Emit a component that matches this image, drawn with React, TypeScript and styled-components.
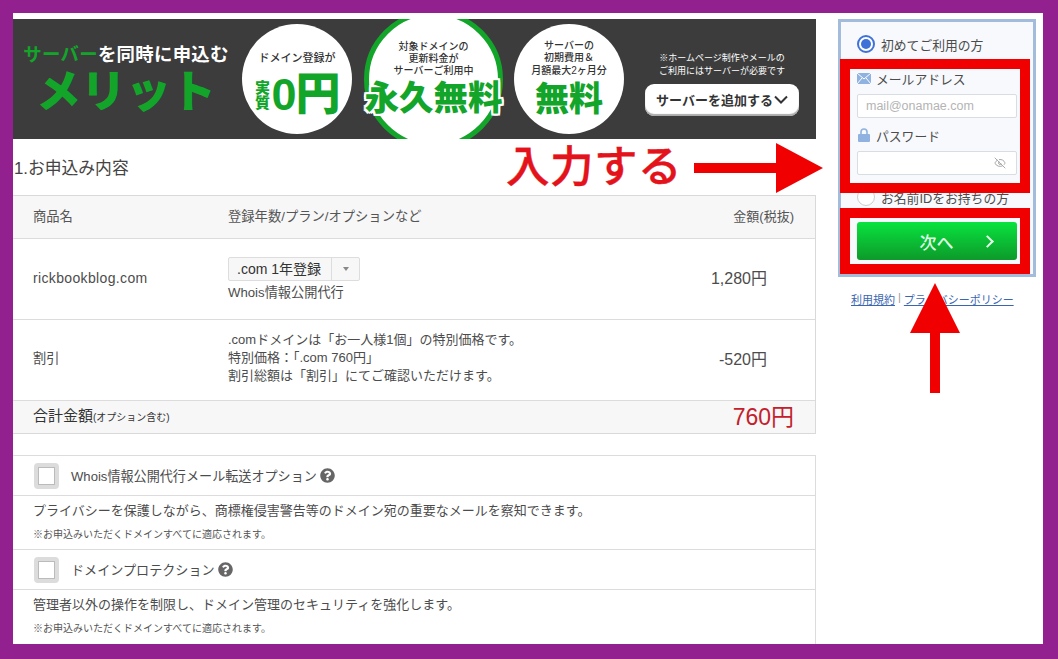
import React from 'react';
import styled, { createGlobalStyle } from 'styled-components';
import { FaQuestionCircle } from 'react-icons/fa';
import { EyeOff } from 'lucide-react';

const GlobalStyle = createGlobalStyle`
  html, body {
    margin: 0;
    padding: 0;
    height: 100%;
    overflow: hidden;
    background: #92218f;
  }
  body {
    font-family: "Liberation Sans", "Noto Sans CJK JP", sans-serif;
    color: #4c4c4c;
  }
  * {
    box-sizing: border-box;
  }
`;

const GREEN = '#12a52a';
const RED = '#f00000';

const Page = styled.div`
  width: 1058px;
  height: 659px;
  padding: 13px 15px 15px 13px;
`;
const Sheet = styled.div`
  position: relative;
  height: 631px;
  background: #fff;
  display: flex;
  overflow: hidden;
  padding-top: 6px;
`;
const Main = styled.main`
  width: 803px;
  flex: none;
`;

/* banner */
const Banner = styled.div`
  height: 120px;
  background: #3c3c3c;
  display: flex;
  align-items: center;
  overflow: hidden;
  padding-left: 10px;
`;
const Headline = styled.div`
  width: 206px;
  flex: none;
  text-align: center;
  margin-top: 3px;
`;
const HeadlineTop = styled.div`
  font-size: 18.4px;
  font-weight: 700;
  color: #fff;
  line-height: 22px;
  white-space: nowrap;
  letter-spacing: 0.3px;
`;
const GreenText = styled.span`
  color: ${GREEN};
`;
const HeadlineBig = styled.div`
  font-size: 45px;
  font-weight: 900;
  color: ${GREEN};
  line-height: 50px;
  margin-top: 2px;
  white-space: nowrap;
`;
const Circle = styled.div<{ $size: number; $ring?: boolean }>`
  width: ${p => p.$size}px;
  height: ${p => p.$size}px;
  flex: none;
  border-radius: 50%;
  background: #fff;
  border: ${p => (p.$ring ? `5px solid ${GREEN}` : 'none')};
  display: flex;
  flex-direction: column;
  align-items: center;
  justify-content: center;
  color: #333;
  font-weight: 500;
  font-size: 10px;
  line-height: 12.5px;
  text-align: center;
  white-space: nowrap;
`;
const FirstCircle = styled(Circle)`
  margin-left: 13px;
  font-size: 11px;
  padding-top: 12px;
`;
const RingCircle = styled(Circle)`
  margin-left: 12px;
  line-height: 12px;
`;
const LastCircle = styled(Circle)`
  margin-left: 11px;
`;
const ZeroPrice = styled.div`
  display: flex;
  align-items: center;
  color: ${GREEN};
  font-weight: 900;
  margin-top: 8px;
`;
const ZeroSmall = styled.span`
  font-size: 15px;
  line-height: 15px;
  width: 16px;
  white-space: normal;
  margin-right: 1px;
`;
const ZeroBig = styled.span`
  font-size: 45px;
  line-height: 46px;
  letter-spacing: -1px;
`;
const FreeForever = styled.div`
  font-size: 34.5px;
  line-height: 38px;
  font-weight: 900;
  color: ${GREEN};
  margin-top: 2px;
  text-shadow: 2px 0 0 #fff, -2px 0 0 #fff, 0 2px 0 #fff, 0 -2px 0 #fff,
    2px 2px 0 #fff, -2px -2px 0 #fff, 2px -2px 0 #fff, -2px 2px 0 #fff;
`;
const FreeShort = styled.div`
  font-size: 34px;
  line-height: 38px;
  font-weight: 900;
  color: ${GREEN};
  margin-top: 3px;
`;
const BannerSide = styled.div`
  flex: 1;
  display: flex;
  flex-direction: column;
  align-items: flex-end;
  padding-right: 17px;
  margin-top: 9px;
`;
const BannerNote = styled.div`
  width: 154px;
  font-size: 9px;
  line-height: 13px;
  color: #fff;
  text-align: center;
  white-space: nowrap;
`;
const AddServer = styled.div`
  width: 154px;
  height: 32px;
  margin-top: 6px;
  background: #fff;
  border-radius: 9px;
  box-shadow: inset 0 -2px 1px #aaa;
  color: #333;
  font-size: 13px;
  font-weight: 700;
  display: flex;
  align-items: center;
  justify-content: center;
  gap: 1px;
  white-space: nowrap;
`;

/* order table */
const SectionTitle = styled.h2`
  margin: 0;
  height: 56px;
  padding-left: 1px;
  font-size: 16.8px;
  font-weight: 400;
  line-height: 60px;
  color: #444;
  white-space: nowrap;
`;
const Table = styled.div`
  border: solid #d9d9d9;
  border-width: 1px 1px 1px 0;
`;
const Row = styled.div<{ $height: number; $shade?: boolean }>`
  height: ${p => p.$height}px;
  display: grid;
  grid-template-columns: 195px 1fr auto;
  align-items: center;
  padding-left: 20px;
  font-size: 13.2px;
  background: ${p => (p.$shade ? '#f7f7f7' : '#fff')};
  border-bottom: 1px solid #dcdcdc;
  &:last-child {
    border-bottom: 0;
  }
`;
const HeadCell = styled.div<{ $right?: boolean }>`
  font-size: ${p => (p.$right ? '13px' : '13.3px')};
  color: #555;
  padding: 0 ${p => (p.$right ? '21px' : 0)} 3px 0;
`;
const ProductName = styled.div`
  font-size: 14px;
  letter-spacing: 0.35px;
  padding-bottom: 3px;
`;
const DiscountName = styled.div`
  padding-bottom: 6px;
`;
const Amount = styled.div`
  font-size: 16px;
  padding: 0 48px 5px 0;
  text-align: right;
`;
const Plan = styled.div`
  line-height: 18px;
`;
const PlanSelect = styled.div`
  width: 132px;
  height: 24px;
  margin-bottom: 3px;
  display: flex;
  border: 1px solid #ddd;
  border-radius: 2px;
  background: #f7f7f7;
  font-size: 14px;
  line-height: 23px;
  color: #333;
`;
const PlanValue = styled.div`
  flex: 1;
  padding-left: 8px;
  border-right: 1px solid #ddd;
  white-space: nowrap;
`;
const PlanCaret = styled.div`
  width: 27px;
  display: flex;
  align-items: center;
  justify-content: center;
  &::after {
    content: '';
    border: 3px solid transparent;
    border-top: 4px solid #888;
    border-bottom: 0;
  }
`;
const Note = styled.div`
  font-size: 13px;
  line-height: 18px;
  padding-bottom: 4px;
  white-space: nowrap;
`;
const TotalLabel = styled.div`
  font-size: 15px;
  line-height: 20px;
  color: #333;
  padding-bottom: 1px;
  white-space: nowrap;
`;
const TotalSub = styled.span`
  font-size: 10px;
`;
const TotalAmount = styled.div`
  font-size: 23px;
  line-height: 26px;
  color: #c4202c;
  padding: 0 21px 1px 0;
`;

/* options */
const Options = styled.div`
  margin-top: 21px;
  border: solid #dcdcdc;
  border-width: 1px 1px 0 0;
`;
const OptionHead = styled.div`
  height: 40px;
  display: flex;
  align-items: center;
  padding-left: 21px;
  border-bottom: 1px solid #dcdcdc;
`;
const Checkbox = styled.span`
  width: 25px;
  height: 26px;
  flex: none;
  border: 4px solid #dcdcdc;
  border-radius: 4px;
  background: #fff;
  box-shadow: inset 0 0 0 1px #bbb;
`;
const OptionName = styled.span`
  margin-left: 12px;
  font-size: 13.1px;
  white-space: nowrap;
`;
const HelpIcon = styled(FaQuestionCircle)`
  margin-left: 3px;
  color: #666;
  flex: none;
`;
const OptionBody = styled.div`
  height: 54px;
  padding: 6px 0 0 20px;
  border-bottom: 1px solid #dcdcdc;
  &:last-child {
    border-bottom: 0;
  }
`;
const OptionText = styled.div`
  font-size: 13px;
  line-height: 18px;
  white-space: nowrap;
`;
const OptionFine = styled.div`
  font-size: 10px;
  line-height: 14px;
  margin-top: 8px;
  color: #555;
  white-space: nowrap;
`;

/* login side */
const Side = styled.aside`
  margin-left: 22px;
  width: 198px;
  flex: none;
`;
const LoginBox = styled.div`
  height: 258px;
  background: #f7f9fc;
  border: 3px solid #a4bcdc;
  padding: 13px 16px 0;
`;
const RadioRow = styled.label`
  display: flex;
  align-items: center;
  gap: 6px;
  height: 18px;
  font-size: 12.8px;
  white-space: nowrap;
`;
const Radio = styled.span<{ $on?: boolean }>`
  width: 18px;
  height: 18px;
  flex: none;
  border-radius: 50%;
  background: #fff;
  border: ${p => (p.$on ? '2px solid #3f72d8' : '1px solid #ccc')};
  display: flex;
  align-items: center;
  justify-content: center;
  &::after {
    content: '';
    width: 10px;
    height: 10px;
    border-radius: 50%;
    background: ${p => (p.$on ? '#3f72d8' : 'transparent')};
  }
`;
const FieldLabel = styled.div`
  display: flex;
  align-items: center;
  gap: 5px;
  height: 16px;
  font-size: 12.8px;
  white-space: nowrap;
`;
const EmailLabel = styled(FieldLabel)`
  margin-top: 17px;
`;
const PasswordLabel = styled(FieldLabel)`
  margin-top: 9px;
`;
const FieldBox = styled.div`
  height: 24px;
  width: 160px;
  margin-top: 8px;
  padding: 0 10px 0 8px;
  background: #fff;
  border: 1px solid #d8dde3;
  border-radius: 2px;
  display: flex;
  align-items: center;
  justify-content: space-between;
  font-size: 12.5px;
  color: #b4b4b4;
`;
const SecondRadio = styled(RadioRow)`
  margin-top: 13px;
`;
const NextButton = styled.div`
  width: 160px;
  height: 38px;
  margin-top: 16px;
  border-radius: 3px;
  background: linear-gradient(#08e33e, #0d9a2a);
  color: #dfffe5;
  font-size: 17px;
  font-weight: 500;
  display: flex;
  align-items: center;
  justify-content: center;
  gap: 29px;
  padding-left: 37px;
`;
const Chevron = styled.span`
  width: 9px;
  height: 9px;
  border: solid #e6ffe9;
  border-width: 2px 2px 0 0;
  transform: rotate(45deg);
`;
const Links = styled.div`
  margin-top: 14px;
  padding-left: 13px;
  font-size: 11px;
  color: #999;
  display: flex;
  gap: 3px;
  white-space: nowrap;
`;
const TextLink = styled.a`
  color: #3a66b0;
  text-decoration: underline;
`;

/* annotations laid over the page */
const RedFrame = styled.div<{ $top: number; $height: number }>`
  position: absolute;
  left: 827px;
  width: 190px;
  top: ${p => p.$top}px;
  height: ${p => p.$height}px;
  border: 10px solid ${RED};
`;
const Callout = styled.div`
  position: absolute;
  left: 493px;
  top: 126px;
  font-size: 43.5px;
  line-height: 56px;
  font-weight: 500;
  letter-spacing: 0.5px;
  color: #e3121b;
  -webkit-text-stroke: 0.4px #e3121b;
  white-space: nowrap;
`;
const ArrowSvg = styled.svg<{ $left: number; $top: number }>`
  position: absolute;
  left: ${p => p.$left}px;
  top: ${p => p.$top}px;
`;

const App = () => (
  <Page>
    <GlobalStyle />
    <Sheet>
      <Main>
        <Banner>
          <Headline>
            <HeadlineTop>
              <GreenText>サーバー</GreenText>を同時に申込む
            </HeadlineTop>
            <HeadlineBig>メリット</HeadlineBig>
          </Headline>
          <FirstCircle $size={110}>
            ドメイン登録が
            <ZeroPrice>
              <ZeroSmall>実質</ZeroSmall>
              <ZeroBig>0円</ZeroBig>
            </ZeroPrice>
          </FirstCircle>
          <RingCircle $size={139} $ring>
            対象ドメインの
            <br />
            更新料金が
            <br />
            サーバーご利用中
            <FreeForever>永久無料</FreeForever>
          </RingCircle>
          <LastCircle $size={110}>
            サーバーの
            <br />
            初期費用＆
            <br />
            月額最大2ヶ月分
            <FreeShort>無料</FreeShort>
          </LastCircle>
          <BannerSide>
            <BannerNote>
              ※ホームページ制作やメールの
              <br />
              ご利用にはサーバーが必要です
            </BannerNote>
            <AddServer>
              サーバーを追加する
              <svg width="14" height="9" viewBox="0 0 14 9">
                <path d="M1 1.5 7 7.5 13 1.5" fill="none" stroke="#333" strokeWidth="2" />
              </svg>
            </AddServer>
          </BannerSide>
        </Banner>

        <SectionTitle>1.お申込み内容</SectionTitle>

        <Table>
          <Row $height={43} $shade>
            <HeadCell>商品名</HeadCell>
            <HeadCell>登録年数/プラン/オプションなど</HeadCell>
            <HeadCell $right>金額(税抜)</HeadCell>
          </Row>
          <Row $height={81}>
            <ProductName>rickbookblog.com</ProductName>
            <Plan>
              <PlanSelect>
                <PlanValue>.com 1年登録</PlanValue>
                <PlanCaret />
              </PlanSelect>
              Whois情報公開代行
            </Plan>
            <Amount>1,280円</Amount>
          </Row>
          <Row $height={81}>
            <DiscountName>割引</DiscountName>
            <Note>
              .comドメインは「お一人様1個」の特別価格です。
              <br />
              特別価格：「.com 760円」
              <br />
              割引総額は「割引」にてご確認いただけます。
            </Note>
            <Amount>-520円</Amount>
          </Row>
          <Row $height={32} $shade>
            <TotalLabel>
              合計金額<TotalSub>(オプション含む)</TotalSub>
            </TotalLabel>
            <div />
            <TotalAmount>760円</TotalAmount>
          </Row>
        </Table>

        <Options>
          <OptionHead>
            <Checkbox />
            <OptionName>Whois情報公開代行メール転送オプション</OptionName>
            <HelpIcon size={15} />
          </OptionHead>
          <OptionBody>
            <OptionText>プライバシーを保護しながら、商標権侵害警告等のドメイン宛の重要なメールを察知できます。</OptionText>
            <OptionFine>※お申込みいただくドメインすべてに適応されます。</OptionFine>
          </OptionBody>
          <OptionHead>
            <Checkbox />
            <OptionName>ドメインプロテクション</OptionName>
            <HelpIcon size={15} />
          </OptionHead>
          <OptionBody>
            <OptionText>管理者以外の操作を制限し、ドメイン管理のセキュリティを強化します。</OptionText>
            <OptionFine>※お申込みいただくドメインすべてに適応されます。</OptionFine>
          </OptionBody>
        </Options>
      </Main>

      <Side>
        <LoginBox>
          <RadioRow>
            <Radio $on />
            初めてご利用の方
          </RadioRow>
          <EmailLabel>
            <svg width="14" height="11" viewBox="0 0 14 11">
              <rect width="14" height="11" fill="#8fb2e0" />
              <path d="M0 0 7 6 14 0M0 11 5 5M14 11 9 5" fill="none" stroke="#fff" strokeWidth="1" />
            </svg>
            メールアドレス
          </EmailLabel>
          <FieldBox>mail@onamae.com</FieldBox>
          <PasswordLabel>
            <svg width="14" height="14" viewBox="0 0 14 14">
              <path d="M4 7V4a3 3 0 0 1 6 0v3" fill="none" stroke="#8fb2e0" strokeWidth="1.6" />
              <rect x="1" y="6" width="12" height="8" rx="1" fill="#8fb2e0" />
            </svg>
            パスワード
          </PasswordLabel>
          <FieldBox>
            <span />
            <EyeOff size={12} color="#aaa" />
          </FieldBox>
          <SecondRadio>
            <Radio />
            お名前IDをお持ちの方
          </SecondRadio>
          <NextButton>
            次へ
            <Chevron />
          </NextButton>
        </LoginBox>
        <Links>
          <TextLink>利用規約</TextLink>|<TextLink>プライバシーポリシー</TextLink>
        </Links>
      </Side>

      <RedFrame $top={46} $height={134} />
      <RedFrame $top={195} $height={66} />
      <Callout>入力する</Callout>
      <ArrowSvg $left={681} $top={129} width="130" height="52" viewBox="0 0 130 52">
        <path d="M0 21H82V1L129 26 82 51V31H0Z" fill={RED} />
      </ArrowSvg>
      <ArrowSvg $left={897} $top={270} width="50" height="111" viewBox="0 0 50 111">
        <path d="M25 0 50 50H30V110H20V50H0Z" fill={RED} />
      </ArrowSvg>
    </Sheet>
  </Page>
);

export default App;
